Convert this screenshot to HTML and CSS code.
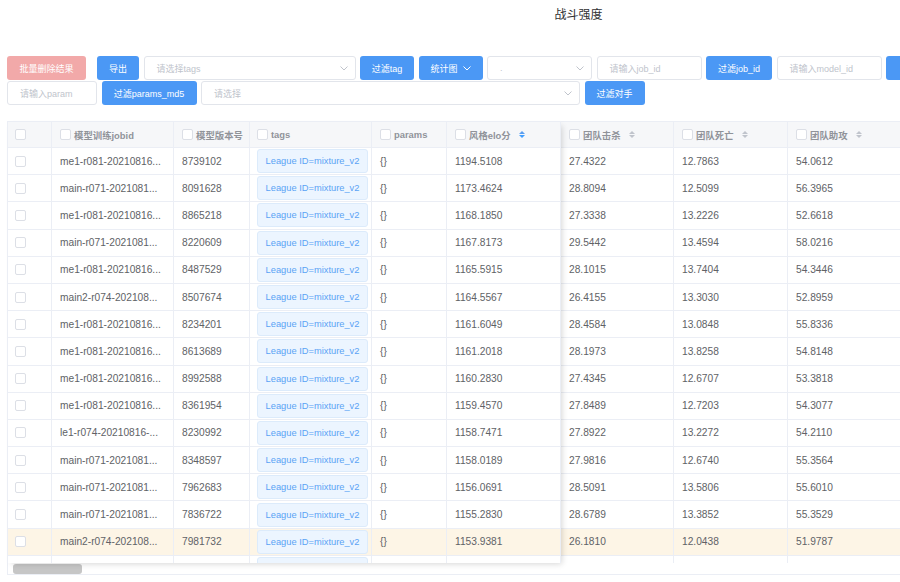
FILE: index.html
```html
<!DOCTYPE html>
<html lang="zh">
<head>
<meta charset="utf-8">
<title>战斗强度</title>
<link rel="stylesheet" href="styles.css">
</head>
<body>
<div class="page">
  <h1 class="title">战斗强度</h1>
  <div class="toolbar">
    <div class="bar">
      <button class="btn btn-danger w-del">批量删除结果</button>
      <button class="btn w-export">导出</button>
      <div class="field w-tags"><span>请选择tags</span><svg class="chev" viewBox="0 0 8 5"><polyline points="0.5,0.5 4,4 7.5,0.5"/></svg></div>
      <button class="btn w-tag">过滤tag</button>
      <button class="btn w-chart">统计图<svg class="chev chev-w" viewBox="0 0 8 5"><polyline points="0.5,0.5 4,4 7.5,0.5"/></svg></button>
      <div class="field w-md"><span>.</span><svg class="chev" viewBox="0 0 8 5"><polyline points="0.5,0.5 4,4 7.5,0.5"/></svg></div>
      <div class="field w-md"><span>请输入job_id</span></div>
      <button class="btn w-job">过滤job_id</button>
      <div class="field w-md"><span>请输入model_id</span></div>
      <button class="btn w-model">过滤</button>
    </div>
    <div class="bar">
      <div class="field w-param"><span>请输入param</span></div>
      <button class="btn w-md5">过滤params_md5</button>
      <div class="field w-opp"><span>请选择</span><svg class="chev" viewBox="0 0 8 5"><polyline points="0.5,0.5 4,4 7.5,0.5"/></svg></div>
      <button class="btn w-rival">过滤对手</button>
    </div>
  </div>

  <div class="table">
    <div class="view">
      <div class="row head">
        <div class="cell c0"><i class="cb"></i></div>
        <div class="cell c1"><i class="cb"></i><span class="lbl">模型训练jobid</span></div>
        <div class="cell c2"><i class="cb"></i><span class="lbl">模型版本号</span></div>
        <div class="cell c3"><i class="cb"></i><span class="lbl">tags</span></div>
        <div class="cell c4"><i class="cb"></i><span class="lbl">params</span></div>
        <div class="cell c5"><i class="cb"></i><span class="lbl">风格elo分</span><span class="sort active"><i class="up"></i><i class="down"></i></span></div>
        <div class="cell c6"><i class="cb"></i><span class="lbl">团队击杀</span><span class="sort"><i class="up"></i><i class="down"></i></span></div>
        <div class="cell c7"><i class="cb"></i><span class="lbl">团队死亡</span><span class="sort"><i class="up"></i><i class="down"></i></span></div>
        <div class="cell c8"><i class="cb"></i><span class="lbl">团队助攻</span><span class="sort"><i class="up"></i><i class="down"></i></span></div>
        <div class="cell c9"></div>
      </div>

      <div class="row"><div class="cell c0"><i class="cb"></i></div><div class="cell c1">me1-r081-20210816...</div><div class="cell c2">8739102</div><div class="cell c3"><span class="tag">League ID=mixture_v2</span></div><div class="cell c4">{}</div><div class="cell c5">1194.5108</div><div class="cell c6">27.4322</div><div class="cell c7">12.7863</div><div class="cell c8">54.0612</div><div class="cell c9"></div></div>
      <div class="row"><div class="cell c0"><i class="cb"></i></div><div class="cell c1">main-r071-2021081...</div><div class="cell c2">8091628</div><div class="cell c3"><span class="tag">League ID=mixture_v2</span></div><div class="cell c4">{}</div><div class="cell c5">1173.4624</div><div class="cell c6">28.8094</div><div class="cell c7">12.5099</div><div class="cell c8">56.3965</div><div class="cell c9"></div></div>
      <div class="row"><div class="cell c0"><i class="cb"></i></div><div class="cell c1">me1-r081-20210816...</div><div class="cell c2">8865218</div><div class="cell c3"><span class="tag">League ID=mixture_v2</span></div><div class="cell c4">{}</div><div class="cell c5">1168.1850</div><div class="cell c6">27.3338</div><div class="cell c7">13.2226</div><div class="cell c8">52.6618</div><div class="cell c9"></div></div>
      <div class="row"><div class="cell c0"><i class="cb"></i></div><div class="cell c1">main-r071-2021081...</div><div class="cell c2">8220609</div><div class="cell c3"><span class="tag">League ID=mixture_v2</span></div><div class="cell c4">{}</div><div class="cell c5">1167.8173</div><div class="cell c6">29.5442</div><div class="cell c7">13.4594</div><div class="cell c8">58.0216</div><div class="cell c9"></div></div>
      <div class="row"><div class="cell c0"><i class="cb"></i></div><div class="cell c1">me1-r081-20210816...</div><div class="cell c2">8487529</div><div class="cell c3"><span class="tag">League ID=mixture_v2</span></div><div class="cell c4">{}</div><div class="cell c5">1165.5915</div><div class="cell c6">28.1015</div><div class="cell c7">13.7404</div><div class="cell c8">54.3446</div><div class="cell c9"></div></div>
      <div class="row"><div class="cell c0"><i class="cb"></i></div><div class="cell c1">main2-r074-202108...</div><div class="cell c2">8507674</div><div class="cell c3"><span class="tag">League ID=mixture_v2</span></div><div class="cell c4">{}</div><div class="cell c5">1164.5567</div><div class="cell c6">26.4155</div><div class="cell c7">13.3030</div><div class="cell c8">52.8959</div><div class="cell c9"></div></div>
      <div class="row"><div class="cell c0"><i class="cb"></i></div><div class="cell c1">me1-r081-20210816...</div><div class="cell c2">8234201</div><div class="cell c3"><span class="tag">League ID=mixture_v2</span></div><div class="cell c4">{}</div><div class="cell c5">1161.6049</div><div class="cell c6">28.4584</div><div class="cell c7">13.0848</div><div class="cell c8">55.8336</div><div class="cell c9"></div></div>
      <div class="row"><div class="cell c0"><i class="cb"></i></div><div class="cell c1">me1-r081-20210816...</div><div class="cell c2">8613689</div><div class="cell c3"><span class="tag">League ID=mixture_v2</span></div><div class="cell c4">{}</div><div class="cell c5">1161.2018</div><div class="cell c6">28.1973</div><div class="cell c7">13.8258</div><div class="cell c8">54.8148</div><div class="cell c9"></div></div>
      <div class="row"><div class="cell c0"><i class="cb"></i></div><div class="cell c1">me1-r081-20210816...</div><div class="cell c2">8992588</div><div class="cell c3"><span class="tag">League ID=mixture_v2</span></div><div class="cell c4">{}</div><div class="cell c5">1160.2830</div><div class="cell c6">27.4345</div><div class="cell c7">12.6707</div><div class="cell c8">53.3818</div><div class="cell c9"></div></div>
      <div class="row"><div class="cell c0"><i class="cb"></i></div><div class="cell c1">me1-r081-20210816...</div><div class="cell c2">8361954</div><div class="cell c3"><span class="tag">League ID=mixture_v2</span></div><div class="cell c4">{}</div><div class="cell c5">1159.4570</div><div class="cell c6">27.8489</div><div class="cell c7">12.7203</div><div class="cell c8">54.3077</div><div class="cell c9"></div></div>
      <div class="row"><div class="cell c0"><i class="cb"></i></div><div class="cell c1">le1-r074-20210816-...</div><div class="cell c2">8230992</div><div class="cell c3"><span class="tag">League ID=mixture_v2</span></div><div class="cell c4">{}</div><div class="cell c5">1158.7471</div><div class="cell c6">27.8922</div><div class="cell c7">13.2272</div><div class="cell c8">54.2110</div><div class="cell c9"></div></div>
      <div class="row"><div class="cell c0"><i class="cb"></i></div><div class="cell c1">main-r071-2021081...</div><div class="cell c2">8348597</div><div class="cell c3"><span class="tag">League ID=mixture_v2</span></div><div class="cell c4">{}</div><div class="cell c5">1158.0189</div><div class="cell c6">27.9816</div><div class="cell c7">12.6740</div><div class="cell c8">55.3564</div><div class="cell c9"></div></div>
      <div class="row"><div class="cell c0"><i class="cb"></i></div><div class="cell c1">main-r071-2021081...</div><div class="cell c2">7962683</div><div class="cell c3"><span class="tag">League ID=mixture_v2</span></div><div class="cell c4">{}</div><div class="cell c5">1156.0691</div><div class="cell c6">28.5091</div><div class="cell c7">13.5806</div><div class="cell c8">55.6010</div><div class="cell c9"></div></div>
      <div class="row"><div class="cell c0"><i class="cb"></i></div><div class="cell c1">main-r071-2021081...</div><div class="cell c2">7836722</div><div class="cell c3"><span class="tag">League ID=mixture_v2</span></div><div class="cell c4">{}</div><div class="cell c5">1155.2830</div><div class="cell c6">28.6789</div><div class="cell c7">13.3852</div><div class="cell c8">55.3529</div><div class="cell c9"></div></div>
      <div class="row hl"><div class="cell c0"><i class="cb"></i></div><div class="cell c1">main2-r074-202108...</div><div class="cell c2">7981732</div><div class="cell c3"><span class="tag">League ID=mixture_v2</span></div><div class="cell c4">{}</div><div class="cell c5">1153.9381</div><div class="cell c6">26.1810</div><div class="cell c7">12.0438</div><div class="cell c8">51.9787</div><div class="cell c9"></div></div>
      <div class="row"><div class="cell c0"></div><div class="cell c1"></div><div class="cell c2"></div><div class="cell c3"><span class="tag"></span></div><div class="cell c4"></div><div class="cell c5"></div><div class="cell c6"></div><div class="cell c7"></div><div class="cell c8"></div><div class="cell c9"></div></div>
    </div>
    <div class="fixed-shade"></div>
    <div class="hscroll"><div class="thumb"></div></div>
  </div>
</div>
</body>
</html>
```

FILE: styles.css
```css
html, body {
  margin: 0;
  padding: 0;
  overflow: hidden;
  background: #fff;
}
body {
  font-family: "Liberation Sans", "Noto Sans CJK SC", sans-serif;
  color: #606266;
}
.page {
  width: 1143px;
  padding-left: 7px;
}
.title {
  margin: 0;
  padding-top: 8px;
  height: 14px;
  line-height: 14px;
  font-size: 12px;
  font-weight: normal;
  text-align: center;
  color: #303133;
}

/* toolbar */
.toolbar {
  margin-top: 34px;
}
.bar {
  display: flex;
  gap: 4.5px;
  height: 24px;
  white-space: nowrap;
}
.bar + .bar {
  margin-top: 1px;
}
.btn {
  flex: none;
  height: 24px;
  padding: 0;
  border: 0;
  border-radius: 3px;
  background: #4b98f5;
  color: #fff;
  font-family: "Liberation Sans", "Noto Sans CJK SC", sans-serif;
  font-size: 9px;
  display: flex;
  align-items: center;
  justify-content: center;
}
.btn-danger {
  background: #f2a9a9;
}
.field {
  flex: none;
  height: 24px;
  box-sizing: border-box;
  border: 1px solid #e2e5eb;
  border-radius: 3px;
  padding: 0 7px 0 12px;
  font-size: 9px;
  color: #c0c4cc;
  display: flex;
  align-items: center;
  justify-content: space-between;
}
.chev {
  width: 8px;
  height: 5px;
  fill: none;
  stroke: #c0c4cc;
  stroke-width: 1;
}
.chev-w {
  stroke: #fff;
  margin-left: 5px;
}
.w-del { width: 79px; }
.w-export { width: 42px; margin-left: 6.5px; }
.w-tags { width: 212px; }
.w-tag { width: 54px; }
.w-chart { width: 64px; }
.w-md { width: 105px; }
.w-job { width: 66px; }
.w-model { width: 60px; }
.w-param { width: 90px; }
.w-md5 { width: 95px; }
.w-opp { width: 379px; }
.w-rival { width: 60px; }

/* table */
.table {
  position: relative;
  margin-top: 16px;
  width: 1136px;
  border-top: 1px solid #ebeef5;
  border-left: 1px solid #ebeef5;
}
.view {
  height: 441px;
  overflow: hidden;
}
.row {
  display: flex;
  height: 27.2px;
  box-sizing: border-box;
  border-bottom: 1px solid #ebeef5;
  font-size: 10.2px;
  color: #606266;
}
.row.head {
  height: 26px;
  background: #f6f7f9;
  color: #909399;
  font-weight: bold;
  font-size: 9.4px;
}
.row.hl {
  background: #fdf5e6;
}
.cell {
  flex: none;
  box-sizing: border-box;
  border-right: 1px solid #ebeef5;
  padding: 0 8px;
  display: flex;
  align-items: center;
  overflow: hidden;
  white-space: nowrap;
}
.c0 { width: 44px; padding-left: 7px; }
.c1 { width: 122px; }
.c2 { width: 76px; }
.c3 { width: 122px; padding-left: 7px; }
.c4 { width: 75px; }
.c5 { width: 114px; }
.c6 { width: 113px; }
.c7 { width: 114px; }
.c8 { width: 114px; }
.c9 { width: 241px; }

.cb {
  flex: none;
  width: 11px;
  height: 11px;
  box-sizing: border-box;
  border: 1px solid #dcdfe6;
  border-radius: 2px;
  background: #fff;
}
.lbl {
  margin-left: 3px;
}
.sort {
  display: inline-flex;
  flex-direction: column;
  gap: 1.5px;
  margin-left: 8px;
}
.sort i {
  display: block;
  width: 0;
  height: 0;
  border-left: 3.5px solid transparent;
  border-right: 3.5px solid transparent;
}
.sort .up {
  border-bottom: 3.5px solid #c0c4cc;
}
.sort .down {
  border-top: 3.5px solid #c0c4cc;
}
.sort.active .up {
  border-bottom-color: #5a9ef0;
}
.sort.active .down {
  border-top-color: #409eff;
}

.tag {
  flex: none;
  height: 24px;
  width: 111px;
  box-sizing: border-box;
  border: 1px solid #dcebfb;
  border-radius: 3px;
  background: #ecf5ff;
  color: #5aa3f5;
  font-size: 9.3px;
  display: flex;
  align-items: center;
  justify-content: center;
}

.fixed-shade {
  position: absolute;
  left: -1px;
  top: -1px;
  width: 554px;
  height: 442px;
  pointer-events: none;
  box-shadow: 3px 3px 6px -2px rgba(0, 0, 0, 0.16);
}
.hscroll {
  height: 11px;
  border-bottom: 1px solid #ebeef5;
  display: flex;
  align-items: center;
}
.thumb {
  margin-left: 5px;
  width: 69px;
  height: 10px;
  border-radius: 3px;
  background: #c6c6c6;
}
```
